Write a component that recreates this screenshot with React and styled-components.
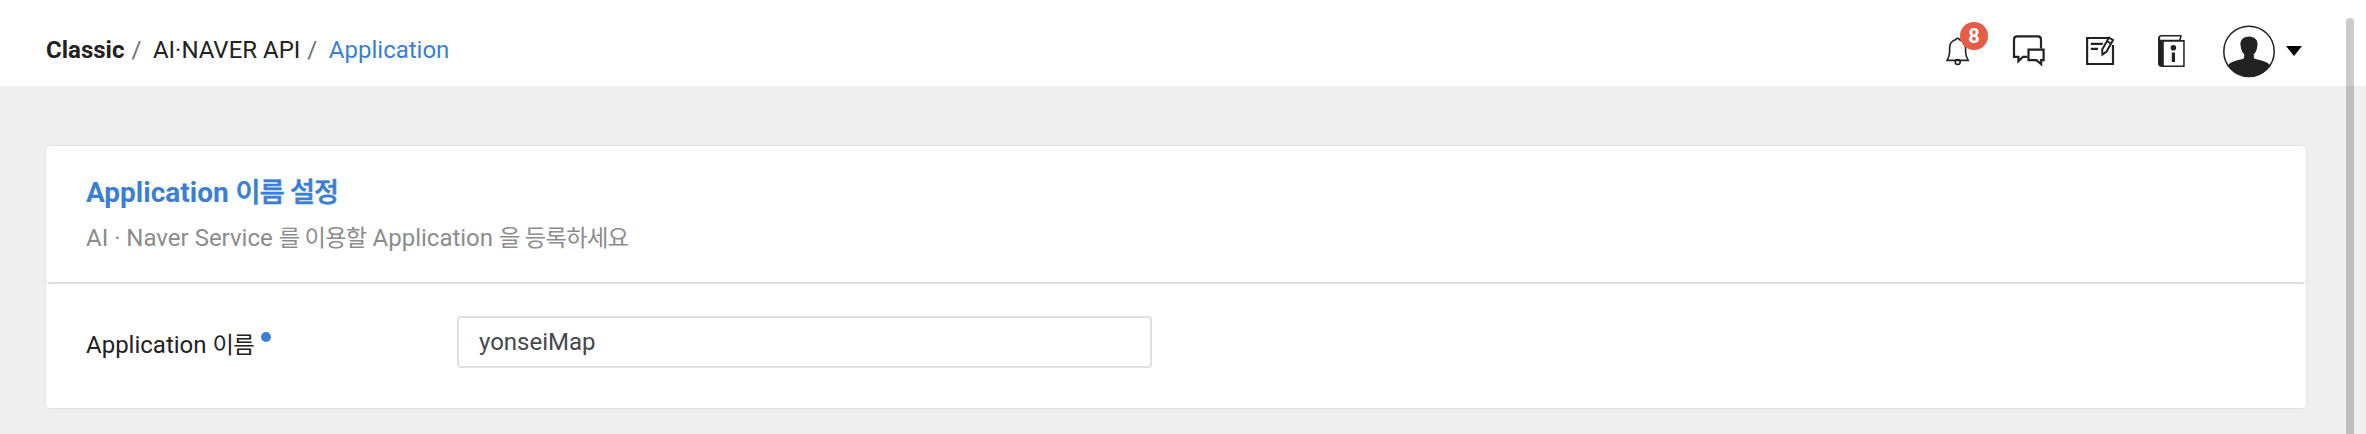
import React from "react";
import styled, { createGlobalStyle } from "styled-components";

const GlobalStyle = createGlobalStyle`
  *, *::before, *::after { box-sizing: border-box; }
  html { background: #efefef; overflow: hidden; }
  body {
    margin: 0;
    color: #222;
    font-family: Roboto, "Noto Sans CJK KR", sans-serif;
    font-size: 24px;
    line-height: 32px;
  }
`;

const Page = styled.div`
  position: relative;
  height: 434px;
  overflow: hidden;
  background: #efefef;
`;

const Header = styled.header`
  display: flex;
  justify-content: space-between;
  height: 86px;
  padding: 0 64px 0 46px;
  background: #fff;
`;

const Breadcrumb = styled.nav`
  display: flex;
  padding-top: 34px;
  white-space: pre;
`;

const Crumb = styled.span`
  color: ${(p) => (p.$active ? "#3a7fd5" : "#222")};
  font-weight: ${(p) => (p.$strong ? 700 : 400)};
`;

const Slash = styled.span`
  width: 28.5px;
  padding-left: 7px;
  color: #6b7177;
`;

const Tools = styled.div`
  display: flex;
  height: 102px;
  align-items: center;
`;

const IconButton = styled.button`
  position: relative;
  display: block;
  flex: none;
  width: ${(p) => p.$width}px;
  margin: 0 ${(p) => p.$gap || 0}px 0 0;
  padding: 0;
  border: 0;
  background: none;
  line-height: 0;
  svg { display: block; overflow: visible; }
`;

const Badge = styled.span`
  position: absolute;
  top: -12px;
  left: 16px;
  width: 28px;
  height: 28px;
  border-radius: 50%;
  background: #e65c46;
  color: #fff;
  font: 700 20px/29px Roboto, sans-serif;
  text-align: center;
`;

const Card = styled.section`
  width: 2262px;
  height: 264px;
  margin: 59px 0 0 45px;
  border: 1px solid #e4e4e4;
  border-radius: 5px;
  background: #fff;
`;

const CardHead = styled.div`
  height: 138px;
  padding: 30px 40px 0;
  border-bottom: 2px solid #e0e0e0;
  border-radius: 4px;
`;

const Korean = styled.span`
  font-size: 0.97em;
  letter-spacing: -0.03em;
  ${(p) => p.$medium && "font-weight: 500; -webkit-text-stroke: 0.6px currentColor;"}
`;

const Title = styled.h2`
  margin: 0;
  color: #3a7fd5;
  font-size: 28px;
  font-weight: 700;
  line-height: 34px;
`;

const Description = styled.p`
  margin: 12px 0 0;
  color: #8c8c8c;
`;

const FormRow = styled.div`
  display: flex;
  align-items: flex-start;
  padding: 32px 40px 0;
`;

const Label = styled.label`
  display: flex;
  width: 371px;
  padding-top: 13px;
  white-space: pre;
`;

const Required = styled.span`
  width: 10px;
  height: 10px;
  margin: 3px 0 0 7px;
  border-radius: 50%;
  background: #3a7fd5;
`;

const Input = styled.input`
  width: 695px;
  height: 52px;
  padding: 0 20px;
  border: 2px solid #e0e0e0;
  border-radius: 4px;
  outline: 0;
  background: #fff;
  color: #45484c;
  font: 400 24px/32px Roboto, "Noto Sans CJK KR", sans-serif;
`;

const ScrollThumb = styled.div`
  position: absolute;
  top: 18px;
  right: 12px;
  width: 8px;
  height: 430px;
  border-radius: 4px;
  background: rgba(0, 0, 0, 0.2);
`;

const BellIcon = () => (
  <svg width="28" height="34" viewBox="0 0 28 34" fill="none" stroke="#222" strokeWidth="1.6">
    <path d="M11.8 5.6C11.8 3.7 15.2 3.7 15.2 5.6C20 7.2 21.6 10 21.6 14V18C21.6 21 22.6 23.5 24.2 26.4H3.1C4.7 23.5 5.6 21 5.6 18V14C5.6 10 7 7.2 11.8 5.6Z" />
    <circle cx="13.7" cy="28" r="2.5" />
  </svg>
);

const ChatIcon = () => (
  <svg width="38" height="34" viewBox="0 0 38 34" fill="none" stroke="#222" strokeWidth="2.2">
    <path d="M17.5 22.8H13L8.4 27.2V22.8H4V5.6Q4 2.4 7.2 2.4H27.8Q31 2.4 31 5.6V14.5" />
    <path d="M18.5 15.6H33.6V26.2H31.2V30.2L26.4 26.2H18.5Z" />
  </svg>
);

const NoteIcon = () => (
  <svg width="34" height="34" viewBox="0 0 34 34" fill="none" stroke="#222" strokeWidth="2.2">
    <path d="M24 4H3.1V30H29V11" />
    <path d="M6.8 9.8H18.8M6.8 14.8H14" />
    <path fill="#fff" strokeWidth="2" d="M25 3.6L29 6L22.6 17.6L18.4 20.6L18.2 15.4Z" />
    <path strokeWidth="1.8" d="M23 7.2L27 9.6" />
  </svg>
);

const GuideIcon = () => (
  <svg width="32" height="34" viewBox="0 0 32 34" fill="none" stroke="#222">
    <path fill="#222" stroke="none" d="M2 4.5Q2 1 5.5 1H25.6V3L24.6 6H28.7V33H6Q2 33 2 29Z" />
    <path fill="#fff" stroke="none" d="M4.8 2.4H24.2L23 5.8H4.4Q3 4 4.8 2.4ZM7.8 7.7H27.2V31.5H7.8Z" />
    <circle cx="17.4" cy="13.7" r="2.8" fill="#222" stroke="none" />
    <path strokeWidth="3.2" d="M17.4 18.5V28" />
  </svg>
);

const AvatarIcon = () => (
  <svg width="52" height="52" viewBox="0 -0.4 52 52">
    <path fill="#222" d="M4.8 39.8C8 36.2 14 34.7 19.5 33.6Q21.4 33.2 21.2 31V28.8C18.6 26.7 18 23 17.5 19.5C17 14.5 20.4 11 26 11S35 14.5 34.5 19.5C34 23 33.4 26.7 30.8 28.8V31Q30.6 33.2 32.5 33.6C38 34.7 44 36.2 47.2 39.8A25.4 25.4 0 0 1 4.8 39.8Z" />
    <circle cx="26" cy="26" r="25.2" fill="none" stroke="#222" strokeWidth="1.5" />
  </svg>
);

const CaretIcon = () => (
  <svg width="16" height="10" viewBox="0 0 16 10">
    <path fill="#000" d="M0 0H16L8 10Z" />
  </svg>
);

export default function App() {
  return (
    <Page>
      <GlobalStyle />
      <Header>
        <Breadcrumb>
          <Crumb $strong>Classic</Crumb>
          <Slash>/</Slash>
          <Crumb>AI·NAVER API</Crumb>
          <Slash>/</Slash>
          <Crumb $active>Application</Crumb>
        </Breadcrumb>
        <Tools>
          <IconButton $width={28} $gap={38}>
            <BellIcon />
            <Badge>8</Badge>
          </IconButton>
          <IconButton $width={38} $gap={36}><ChatIcon /></IconButton>
          <IconButton $width={34} $gap={38}><NoteIcon /></IconButton>
          <IconButton $width={32} $gap={35}><GuideIcon /></IconButton>
          <IconButton $width={52} $gap={11}><AvatarIcon /></IconButton>
          <IconButton $width={16}><CaretIcon /></IconButton>
        </Tools>
      </Header>
      <Card>
        <CardHead>
          <Title>Application <Korean $medium>이름 설정</Korean></Title>
          <Description>
            AI · Naver Service <Korean>를 이용할</Korean> Application <Korean>을 등록하세요</Korean>
          </Description>
        </CardHead>
        <FormRow>
          <Label htmlFor="app-name">
            Application <Korean>이름</Korean>
            <Required />
          </Label>
          <Input id="app-name" defaultValue="yonseiMap" />
        </FormRow>
      </Card>
      <ScrollThumb />
    </Page>
  );
}
